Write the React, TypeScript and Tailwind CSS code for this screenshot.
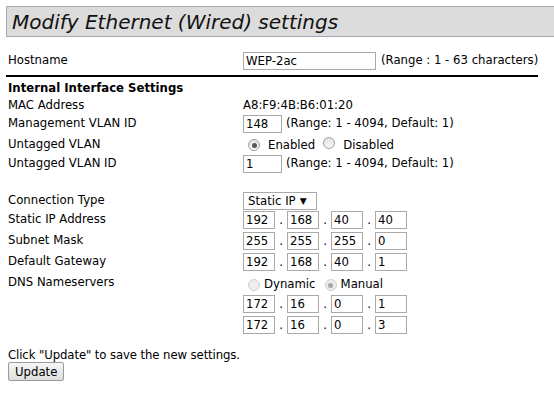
import React from "react";

const font = { fontFamily: '"DejaVu Sans", Verdana, sans-serif' };

const TextBox = ({ value, className }: { value: string; className: string }) => (
    <div className={`h-[18px] border border-[#a9a9a9] bg-white pl-[2px] leading-[16px] text-black ${className}`}>
        {value}
    </div>
);

const Radio = ({ checked, disabled }: { checked?: boolean; disabled?: boolean }) => (
    <span
        className={`inline-flex h-[12px] w-[12px] shrink-0 items-center justify-center rounded-full border ${
            disabled ? "border-[#cfcfcf] bg-[#ededed]" : "border-[#a0a0a0] bg-gradient-to-b from-[#e2e2e2] to-[#f8f8f8]"
        }`}
    >
        {checked && <span className={`h-[5px] w-[5px] rounded-full ${disabled ? "bg-[#a8a8a8]" : "bg-[#555]"}`} />}
    </span>
);

const IpFields = ({ parts }: { parts: string[] }) => (
    <div className="flex items-center">
        {parts.map((p, i) => (
            <React.Fragment key={i}>
                {i > 0 && <span className="w-[12px] text-center leading-[18px]">.</span>}
                <TextBox value={p} className="w-[32px]" />
            </React.Fragment>
        ))}
    </div>
);

const Row = ({ label, children, className = "" }: { label: string; children?: React.ReactNode; className?: string }) => (
    <div className={`flex items-center ${className}`}>
        <div className="w-[235px]">{label}</div>
        <div className="flex items-center">{children}</div>
    </div>
);

export default function App() {
    return (
        <div className="h-[395px] w-[554px] overflow-hidden bg-white text-[11.7px] text-black" style={font}>
            <div className="ml-[6px] mt-[6px] flex h-[31px] items-center border border-r-0 border-[#a6a6b4] bg-[#dcdcdc] pl-[5px]">
                <span className="text-[20px] italic leading-none text-[#111]">Modify Ethernet (Wired) settings</span>
            </div>

            <div className="pl-[8px]">
                <Row label="Hostname" className="mt-[15px]">
                    <TextBox value="WEP-2ac" className="w-[133px]" />
                    <span className="ml-[5px]">(Range : 1 - 63 characters)</span>
                </Row>

                <div className="ml-[-2px] mt-[5px] h-[2px] w-[532px] bg-black" />

                <div className="mt-[5px] font-bold leading-[13px]">Internal Interface Settings</div>
                <Row label="MAC Address" className="mt-[3px] h-[15px]">
                    A8:F9:4B:B6:01:20
                </Row>
                <Row label="Management VLAN ID" className="mt-[2px]">
                    <TextBox value="148" className="w-[39px]" />
                    <span className="ml-[4px]">(Range: 1 - 4094, Default: 1)</span>
                </Row>
                <div className="flex h-[22px] items-center">
                    <div className="w-[235px] pt-[2px]">Untagged VLAN</div>
                    <div className="flex items-center pl-[5px] pt-[3px]">
                        <Radio checked />
                        <span className="ml-[8px]">Enabled</span>
                        <span className="ml-[8px]">
                            <Radio />
                        </span>
                        <span className="ml-[8px]">Disabled</span>
                    </div>
                </div>
                <Row label="Untagged VLAN ID">
                    <TextBox value="1" className="w-[39px]" />
                    <span className="ml-[4px]">(Range: 1 - 4094, Default: 1)</span>
                </Row>

                <Row label="Connection Type" className="mt-[19px]">
                    <div className="flex h-[18px] w-[74px] items-center border border-[#a9a9a9] bg-white pl-[4px] leading-[16px]">
                        Static IP
                        <span className="ml-[4px] text-[9px]">▼</span>
                    </div>
                </Row>
                <Row label="Static IP Address" className="mt-[1px]">
                    <IpFields parts={["192", "168", "40", "40"]} />
                </Row>
                <Row label="Subnet Mask" className="mt-[3px]">
                    <IpFields parts={["255", "255", "255", "0"]} />
                </Row>
                <Row label="Default Gateway" className="mt-[3px]">
                    <IpFields parts={["192", "168", "40", "1"]} />
                </Row>
                <div className="flex h-[22px]">
                    <div className="w-[235px] pt-[3px]">DNS Nameservers</div>
                    <div className="flex items-center pl-[5px] pt-[5px]">
                        <Radio disabled />
                        <span className="ml-[4px]">Dynamic</span>
                        <span className="ml-[9px]">
                            <Radio checked disabled />
                        </span>
                        <span className="ml-[4px]">Manual</span>
                    </div>
                </div>
                <Row label="" className="mt-[2px]">
                    <IpFields parts={["172", "16", "0", "1"]} />
                </Row>
                <Row label="" className="mt-[3px]">
                    <IpFields parts={["172", "16", "0", "3"]} />
                </Row>

                <div className="mt-[14px] leading-[14px] tracking-[-0.1px]">Click "Update" to save the new settings.</div>
                <button className="h-[19px] rounded-[2px] border border-[#9a9a9a] bg-gradient-to-b from-[#f6f6f6] to-[#dedede] px-[6px] text-[11.7px] leading-[16px]">
                    Update
                </button>
            </div>
        </div>
    );
}
